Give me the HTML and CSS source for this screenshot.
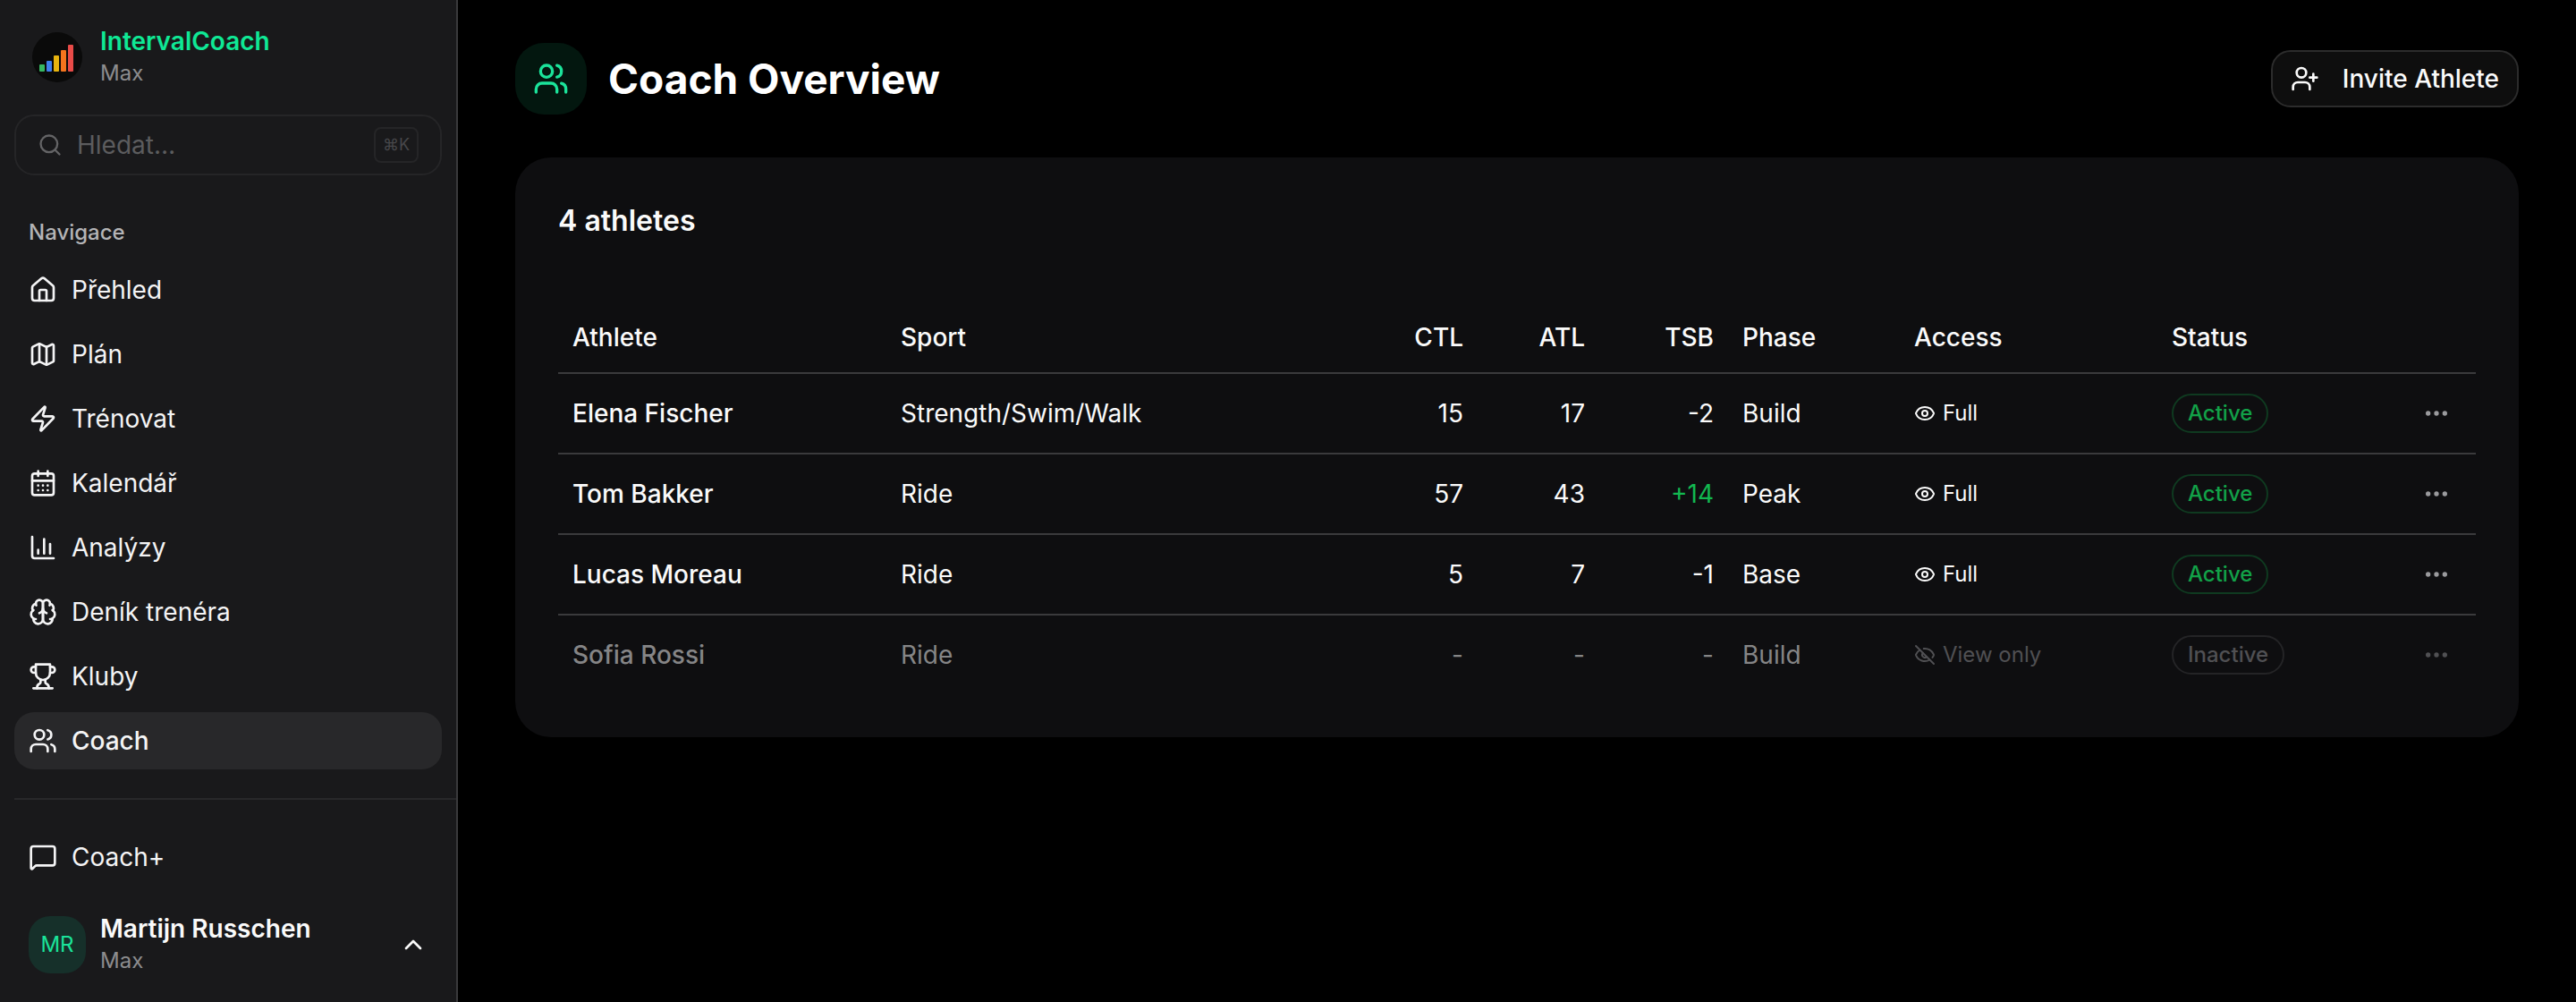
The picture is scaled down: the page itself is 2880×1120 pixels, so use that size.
FILE: index.html
```html
<!DOCTYPE html>
<html lang="cs">
<head>
    <meta charset="UTF-8">
    <meta name="viewport" content="width=device-width, initial-scale=1.0">
    <title>Coach Overview</title>
    <link rel="stylesheet" href="styles.css">
</head>
<body>
    <!-- Shared icons -->
    <svg class="sprite" aria-hidden="true">
        <symbol id="users" viewBox="0 0 24 24"><path d="M16 21v-2a4 4 0 0 0-4-4H6a4 4 0 0 0-4 4v2"/><circle cx="9" cy="7" r="4"/><path d="M22 21v-2a4 4 0 0 0-3-3.87"/><path d="M16 3.13a4 4 0 0 1 0 7.75"/></symbol>
        <symbol id="eye" viewBox="0 0 24 24"><path d="M2.06 12.35a1 1 0 0 1 0-.7 10.75 10.75 0 0 1 19.88 0 1 1 0 0 1 0 .7 10.75 10.75 0 0 1-19.88 0"/><circle cx="12" cy="12" r="3"/></symbol>
        <symbol id="eye-off" viewBox="0 0 24 24"><path d="M10.73 5.08a10.74 10.74 0 0 1 11.2 6.57 1 1 0 0 1 0 .7 10.75 10.75 0 0 1-1.44 2.49"/><path d="M14.08 14.16a3 3 0 0 1-4.24-4.24"/><path d="M17.48 17.5a10.75 10.75 0 0 1-15.42-5.15 1 1 0 0 1 0-.7 10.75 10.75 0 0 1 4.45-5.14"/><path d="m2 2 20 20"/></symbol>
        <symbol id="dots" viewBox="0 0 24 24"><circle cx="12" cy="12" r="1"/><circle cx="19" cy="12" r="1"/><circle cx="5" cy="12" r="1"/></symbol>
    </svg>

    <div class="layout">
        <aside class="sidebar">
            <div class="brand">
                <svg class="logo" viewBox="0 0 56 56" aria-hidden="true">
                    <circle cx="28" cy="28" r="28" fill="#0a0a0a"/>
                    <rect x="8" y="36" width="6" height="8" rx="1" fill="#36b862"/>
                    <rect x="16" y="32" width="6" height="12" rx="1" fill="#3f7fec"/>
                    <rect x="24" y="26" width="6" height="18" rx="1" fill="#e7b40f"/>
                    <rect x="32" y="20" width="6" height="24" rx="1" fill="#f4741d"/>
                    <rect x="40" y="14" width="6" height="30" rx="1" fill="#e84b48"/>
                </svg>
                <div class="who">
                    <span class="name brand-name">IntervalCoach</span>
                    <span class="plan">Max</span>
                </div>
            </div>

            <label class="search">
                <svg class="icon-sm" viewBox="0 0 24 24" aria-hidden="true"><circle cx="11" cy="11" r="8"/><path d="m21 21-4.3-4.3"/></svg>
                <input type="search" placeholder="Hledat…" aria-label="Hledat">
                <kbd>⌘K</kbd>
            </label>

            <div class="nav-title">Navigace</div>
            <nav class="nav">
                <a href="#"><svg class="icon" viewBox="0 0 24 24"><path d="M15 21v-8a1 1 0 0 0-1-1h-4a1 1 0 0 0-1 1v8"/><path d="M3 10a2 2 0 0 1 .71-1.53l7-6a2 2 0 0 1 2.58 0l7 6A2 2 0 0 1 21 10v9a2 2 0 0 1-2 2H5a2 2 0 0 1-2-2z"/></svg>Přehled</a>
                <a href="#"><svg class="icon" viewBox="0 0 24 24"><path d="M14.11 5.55a2 2 0 0 0 1.78 0l3.66-1.83A1 1 0 0 1 21 4.62v12.76a1 1 0 0 1-.55.9l-4.56 2.27a2 2 0 0 1-1.78 0l-4.22-2.1a2 2 0 0 0-1.78 0l-3.66 1.83A1 1 0 0 1 3 19.38V6.62a1 1 0 0 1 .55-.9l4.56-2.27a2 2 0 0 1 1.78 0z"/><path d="M15 5.76v15"/><path d="M9 3.24v15"/></svg>Plán</a>
                <a href="#"><svg class="icon" viewBox="0 0 24 24"><path d="M4 14a1 1 0 0 1-.78-1.63l9.9-10.2a.5.5 0 0 1 .86.46l-1.92 6.02A1 1 0 0 0 13 10h7a1 1 0 0 1 .78 1.63l-9.9 10.2a.5.5 0 0 1-.86-.46l1.92-6.02A1 1 0 0 0 11 14z"/></svg>Trénovat</a>
                <a href="#"><svg class="icon" viewBox="0 0 24 24"><path d="M8 2v4M16 2v4"/><rect width="18" height="18" x="3" y="4" rx="2"/><path d="M3 10h18M8 14h.01M12 14h.01M16 14h.01M8 18h.01M12 18h.01M16 18h.01"/></svg>Kalendář</a>
                <a href="#"><svg class="icon" viewBox="0 0 24 24"><path d="M3 3v16a2 2 0 0 0 2 2h16"/><path d="M18 17V9M13 17V5M8 17v-3"/></svg>Analýzy</a>
                <a href="#"><svg class="icon" viewBox="0 0 24 24"><path d="M12 5a3 3 0 1 0-5.997.125 4 4 0 0 0-2.526 5.77 4 4 0 0 0 .556 6.588A4 4 0 1 0 12 18Z"/><path d="M12 5a3 3 0 1 1 5.997.125 4 4 0 0 1 2.526 5.77 4 4 0 0 1-.556 6.588A4 4 0 1 1 12 18Z"/><path d="M15 13a4.5 4.5 0 0 1-3-4 4.5 4.5 0 0 1-3 4"/><path d="M17.6 6.5a3 3 0 0 0 .399-1.375M6.003 5.125A3 3 0 0 0 6.401 6.5M3.477 10.896a4 4 0 0 1 .585-.396M19.938 10.5a4 4 0 0 1 .585.396M6 18a4 4 0 0 1-1.967-.516M19.967 17.484A4 4 0 0 1 18 18"/></svg>Deník trenéra</a>
                <a href="#"><svg class="icon" viewBox="0 0 24 24"><path d="M6 9H4.5a2.5 2.5 0 0 1 0-5H6M18 9h1.5a2.5 2.5 0 0 0 0-5H18M4 22h16"/><path d="M10 14.66V17c0 .55-.47.98-.97 1.21C7.85 18.75 7 20.24 7 22M14 14.66V17c0 .55.47.98.97 1.21C16.15 18.75 17 20.24 17 22"/><path d="M18 2H6v7a6 6 0 0 0 12 0V2Z"/></svg>Kluby</a>
                <a href="#" class="active"><svg class="icon"><use href="#users"/></svg>Coach</a>
            </nav>

            <div class="sidebar-footer">
                <nav class="nav">
                    <a href="#"><svg class="icon" viewBox="0 0 24 24"><path d="M22 17a2 2 0 0 1-2 2H6.83a2 2 0 0 0-1.41.59l-2.2 2.2A.7.7 0 0 1 2 21.29V5a2 2 0 0 1 2-2h16a2 2 0 0 1 2 2z"/></svg>Coach+</a>
                </nav>
                <button class="user" type="button">
                    <span class="avatar">MR</span>
                    <span class="who">
                        <span class="name">Martijn Russchen</span>
                        <span class="plan">Max</span>
                    </span>
                    <svg class="icon" viewBox="0 0 24 24"><path d="m18 15-6-6-6 6"/></svg>
                </button>
            </div>
        </aside>

        <main class="main">
            <header class="page-header">
                <span class="page-icon"><svg><use href="#users"/></svg></span>
                <h1>Coach Overview</h1>
                <button class="invite" type="button">
                    <svg class="icon" viewBox="0 0 24 24"><path d="M16 21v-2a4 4 0 0 0-4-4H6a4 4 0 0 0-4 4v2"/><circle cx="9" cy="7" r="4"/><path d="M19 8v6M22 11h-6"/></svg>
                    Invite Athlete
                </button>
            </header>

            <section class="card">
                <h2>4 athletes</h2>
                <table class="athletes">
                    <colgroup>
                        <col class="col-athlete">
                        <col>
                        <col class="col-load">
                        <col class="col-load">
                        <col class="col-tsb">
                        <col class="col-phase">
                        <col class="col-access">
                        <col class="col-status">
                        <col class="col-menu">
                    </colgroup>
                    <thead>
                        <tr>
                            <th>Athlete</th>
                            <th>Sport</th>
                            <th class="num">CTL</th>
                            <th class="num">ATL</th>
                            <th class="num">TSB</th>
                            <th>Phase</th>
                            <th>Access</th>
                            <th>Status</th>
                            <th></th>
                        </tr>
                    </thead>
                    <tbody>
                        <tr>
                            <td class="athlete">Elena Fischer</td>
                            <td>Strength/Swim/Walk</td>
                            <td class="num">15</td>
                            <td class="num">17</td>
                            <td class="num">-2</td>
                            <td>Build</td>
                            <td><span class="access"><svg><use href="#eye"/></svg>Full</span></td>
                            <td><span class="badge">Active</span></td>
                            <td class="num"><button class="more" type="button" aria-label="More"><svg><use href="#dots"/></svg></button></td>
                        </tr>
                        <tr>
                            <td class="athlete">Tom Bakker</td>
                            <td>Ride</td>
                            <td class="num">57</td>
                            <td class="num">43</td>
                            <td class="num fresh">+14</td>
                            <td>Peak</td>
                            <td><span class="access"><svg><use href="#eye"/></svg>Full</span></td>
                            <td><span class="badge">Active</span></td>
                            <td class="num"><button class="more" type="button" aria-label="More"><svg><use href="#dots"/></svg></button></td>
                        </tr>
                        <tr>
                            <td class="athlete">Lucas Moreau</td>
                            <td>Ride</td>
                            <td class="num">5</td>
                            <td class="num">7</td>
                            <td class="num">-1</td>
                            <td>Base</td>
                            <td><span class="access"><svg><use href="#eye"/></svg>Full</span></td>
                            <td><span class="badge">Active</span></td>
                            <td class="num"><button class="more" type="button" aria-label="More"><svg><use href="#dots"/></svg></button></td>
                        </tr>
                        <tr class="inactive">
                            <td class="athlete">Sofia Rossi</td>
                            <td>Ride</td>
                            <td class="num">-</td>
                            <td class="num">-</td>
                            <td class="num">-</td>
                            <td>Build</td>
                            <td><span class="access"><svg><use href="#eye-off"/></svg>View only</span></td>
                            <td><span class="badge">Inactive</span></td>
                            <td class="num"><button class="more" type="button" aria-label="More"><svg><use href="#dots"/></svg></button></td>
                        </tr>
                    </tbody>
                </table>
            </section>
        </main>
    </div>
</body>
</html>
```
FILE: styles.css
```css
* {
    box-sizing: border-box;
}

body {
    margin: 0;
    background-color: #000;
    color: #fafafa;
    font-family: Inter, "Liberation Sans", sans-serif;
    font-size: 28px;
    line-height: 40px;
}

button, input, kbd {
    font: inherit;
    color: inherit;
}

svg {
    flex: none;
    fill: none;
    stroke: currentColor;
    stroke-width: 2;
    stroke-linecap: round;
    stroke-linejoin: round;
}

.sprite {
    display: none;
}

.icon {
    width: 32px;
    height: 32px;
}

.icon-sm {
    width: 28px;
    height: 28px;
}

.layout {
    display: flex;
    min-height: 100vh;
}

/* Sidebar */
.sidebar {
    display: flex;
    flex-direction: column;
    flex: none;
    width: 512px;
    padding: 16px 0 16px 16px;
    background-color: #19191b;
    border-right: 2px solid #3a3a3c;
}

.brand {
    display: flex;
    align-items: center;
    gap: 20px;
    height: 96px;
    padding-left: 20px;
}

.logo {
    width: 56px;
    height: 56px;
    stroke: none;
}

.who {
    display: flex;
    flex-direction: column;
    flex: 1;
    text-align: left;
}

.name {
    font-weight: 600;
    line-height: 36px;
}

.brand-name {
    color: #0fe895;
}

.plan {
    color: #8c8c8e;
    font-size: 24px;
    line-height: 36px;
}

.search {
    display: flex;
    align-items: center;
    gap: 16px;
    height: 68px;
    margin: 16px 16px 0 0;
    padding: 0 24px;
    color: #646466;
    border: 2px solid #252527;
    border-radius: 22px;
}

.search input {
    flex: 1;
    min-width: 0;
    padding: 0;
    background: none;
    border: 0;
    outline: 0;
    appearance: none;
}

.search input::placeholder {
    color: #5c5c5e;
    opacity: 1;
}

.search kbd {
    padding: 0 8px;
    color: #47474a;
    font-size: 18px;
    line-height: 36px;
    border: 2px solid #252527;
    border-radius: 8px;
}

.nav-title {
    margin-top: 32px;
    padding: 16px;
    color: #b4b4b6;
    font-size: 24px;
    font-weight: 500;
    line-height: 32px;
}

.nav {
    display: flex;
    flex-direction: column;
    gap: 8px;
    margin-right: 16px;
}

.nav a {
    display: flex;
    align-items: center;
    gap: 16px;
    height: 64px;
    padding: 0 16px;
    color: #f4f4f5;
    text-decoration: none;
    border-radius: 22px;
}

.nav a:hover, .nav .active {
    background-color: #28282a;
}

.nav .active {
    font-weight: 500;
}

.sidebar-footer {
    margin-top: 32px;
    padding-top: 32px;
    border-top: 2px solid #28282a;
}

.user {
    display: flex;
    align-items: center;
    gap: 16px;
    width: 478px;
    height: 96px;
    margin-top: 18px;
    padding: 0 16px;
    background: none;
    border: 0;
    cursor: pointer;
}

.avatar {
    width: 64px;
    color: #1be39a;
    font-size: 24px;
    line-height: 64px;
    background-color: #16302a;
    border-radius: 24px;
}

/* Page */
.main {
    flex: 1;
    min-width: 0;
    padding: 48px 64px;
}

.page-header {
    display: flex;
    align-items: center;
    gap: 24px;
    margin-bottom: 48px;
}

.page-icon {
    display: flex;
    align-items: center;
    justify-content: center;
    width: 80px;
    height: 80px;
    color: #1be39a;
    background-color: #03170f;
    border-radius: 32px;
}

.page-icon svg {
    width: 40px;
    height: 40px;
}

.page-header h1 {
    flex: 1;
    margin: 0;
    color: #fff;
    font-size: 46px;
    font-weight: 700;
    line-height: 64px;
}

.invite {
    display: flex;
    align-items: center;
    gap: 26px;
    height: 64px;
    padding: 0 20px;
    font-weight: 500;
    background-color: #0e0e0e;
    border: 2px solid #2c2c2c;
    border-radius: 22px;
    cursor: pointer;
}

.card {
    padding: 48px;
    background-color: #0e0e10;
    border-radius: 40px;
}

.card h2 {
    margin: 0 0 68px;
    font-size: 32px;
    font-weight: 600;
    line-height: 46px;
}

.athletes {
    width: 100%;
    table-layout: fixed;
    border-collapse: separate;
    border-spacing: 0;
}

.col-athlete { width: 367px; }
.col-load { width: 136px; }
.col-tsb { width: 144px; }
.col-phase { width: 192px; }
.col-access { width: 288px; }
.col-status { width: 260px; }
.col-menu { width: 96px; }

.athletes th, .athletes td {
    height: 90px;
    padding: 0 16px;
    text-align: left;
    white-space: nowrap;
    border-bottom: 2px solid #3a3a3c;
}

.athletes th {
    height: 80px;
    font-weight: 500;
}

.athletes tr:last-child td {
    height: 88px;
    border-bottom: 0;
}

.athletes thead tr:last-child th {
    border-bottom: 2px solid #3a3a3c;
}

.athletes .num {
    text-align: right;
}

.athletes .athlete {
    font-weight: 500;
}

.athletes .fresh {
    color: #12b850;
}

.access {
    display: flex;
    align-items: center;
    gap: 8px;
    font-size: 24px;
}

.access svg {
    width: 24px;
    height: 24px;
}

.badge {
    display: inline-block;
    padding: 0 16px;
    color: #12a148;
    font-size: 24px;
    font-weight: 500;
    line-height: 40px;
    vertical-align: middle;
    border: 2px solid #0f3a20;
    border-radius: 22px;
}

.more {
    display: inline-flex;
    align-items: center;
    justify-content: center;
    width: 56px;
    height: 56px;
    padding: 0;
    color: #9a9a9d;
    vertical-align: middle;
    background: none;
    border: 0;
    cursor: pointer;
}

.more svg {
    width: 32px;
    height: 32px;
}

/* Inactive athletes are dimmed */
.inactive td {
    color: #858586;
}

.inactive .access, .inactive .badge, .inactive .more {
    color: #505053;
}

.inactive .badge {
    border-color: #242426;
}
```
